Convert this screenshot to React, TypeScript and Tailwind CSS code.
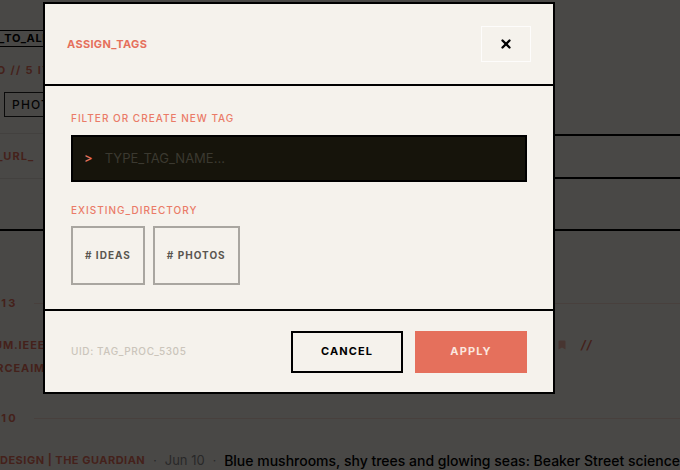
import { X, Bookmark } from "lucide-react";

const existingTags = ["IDEAS", "PHOTOS"];

function PageBehind() {
  return (
    <div className="h-[470px] w-[680px] overflow-hidden bg-[#f5f2ec] font-['Inter',sans-serif]">
      {/* toolbar */}
      <div className="flex flex-col items-start pt-[30px]">
        <div className="-ml-[44px] flex h-[17px] w-[200px] items-center border border-black px-[3px] text-[11px] font-bold tracking-[0.06em] text-black">
          APPLY_TO_ALL
        </div>
        <div className="-ml-[61px] mt-[16px] text-[11px] font-bold leading-[14px] tracking-[0.12em] text-[#e5705c]">
          SELECTED // 5 ITEMS
        </div>
        <div className="ml-[4px] mt-[15px] flex h-[25px] items-center border border-[#222] px-[7px] text-[12px] font-medium tracking-[0.1em] text-[#111]">
          PHOTOS
        </div>
      </div>

      {/* url row */}
      <div className="mt-[16px] flex h-[46px]">
        <div className="flex w-[300px] items-center border-y border-[#e0dbd2] text-[11px] font-bold tracking-[0.1em] text-[#e5705c]">
          <span className="-ml-[55px]">SOURCE_URL_</span>
        </div>
        <div className="mt-[1px] flex-1 border-y-2 border-black" />
      </div>
      <div className="h-[52px] border-b-2 border-black" />

      {/* list */}
      <div className="mt-[65px] flex items-center gap-[16px]">
        <span className="-ml-[33px] text-[11px] font-bold leading-[14px] tracking-[0.2em] text-[#e5705c]">JUN 13</span>
        <div className="h-px flex-1 bg-[#e5705c]/20" />
      </div>
      <div className="mt-[28px] flex">
        <div className="w-[556px] text-[11px] font-bold leading-[14px] tracking-[0.08em] text-[#e5705c]">
          <div className="-ml-[55px]">SPECTRUM.IEEE.ORG</div>
          <div className="-ml-[30px] mt-[9px]">SOURCEAIM</div>
        </div>
        <div className="flex h-[14px] items-center gap-[13px] text-[#e5705c]">
          <Bookmark size={12} className="fill-[#e5705c]/50 text-[#e5705c]/50" strokeWidth={0} />
          <span className="text-[12px] font-bold italic tracking-[0.1em]">//</span>
        </div>
      </div>
      <div className="mt-[36px] flex items-center gap-[16px]">
        <span className="-ml-[33px] text-[11px] font-bold leading-[14px] tracking-[0.2em] text-[#e5705c]">JUN 10</span>
        <div className="h-px flex-1 bg-[#e5705c]/20" />
      </div>
      <div className="mt-[25px] flex items-center gap-[8px] whitespace-nowrap">
        <span className="text-[11px] font-bold tracking-[0.045em] text-[#e5705c]">DESIGN | THE GUARDIAN</span>
        <span className="text-[12px] text-[#888]">·</span>
        <span className="text-[13px] text-[#888]">Jun 10</span>
        <span className="text-[12px] text-[#888]">·</span>
        <span className="text-[14px] font-medium text-black">
          Blue mushrooms, shy trees and glowing seas: Beaker Street science
        </span>
      </div>
    </div>
  );
}

function AssignTagsModal() {
  return (
    <div className="absolute left-[43px] top-[2px] w-[512px] border-2 border-black bg-[#f5f2ec] font-['Inter',sans-serif]">
      <div className="flex h-[82px] items-center justify-between border-b-2 border-black px-[22px]">
        <h2 className="text-[11px] font-bold tracking-[0.03em] text-[#e5705c]">ASSIGN_TAGS</h2>
        <button className="flex h-[36px] w-[50px] items-center justify-center border border-white/80">
          <X size={14} strokeWidth={4} className="text-black" />
        </button>
      </div>

      <div className="border-b-2 border-black px-[26px] pb-[24px] pt-[25px]">
        <div className="text-[10px] font-medium leading-[15px] tracking-[0.1em] text-[#ea7b67]">
          FILTER OR CREATE NEW TAG
        </div>
        <div className="mt-[9px] flex h-[47px] items-center gap-[12px] border-2 border-black bg-[#16140b] pl-[11px]">
          <span className="text-[13px] font-medium text-[#e5705c]">&gt;</span>
          <span className="text-[13px] text-[#3b3930]">TYPE_TAG_NAME...</span>
        </div>
        <div className="mt-[21px] text-[10px] font-medium leading-[15px] tracking-[0.1em] text-[#ea7b67]">
          EXISTING_DIRECTORY
        </div>
        <div className="mt-[8px] flex gap-[8px]">
          {existingTags.map((tag) => (
            <div
              key={tag}
              className="flex h-[59px] items-center border-2 border-[#a9a6a0] px-[12px] text-[10px] font-bold tracking-[0.1em] text-[#5a5650]"
            >
              # {tag}
            </div>
          ))}
        </div>
      </div>

      <div className="flex h-[81px] items-center justify-between px-[26px]">
        <span className="text-[10px] font-medium tracking-[0.06em] text-[#cbc5bb]">UID: TAG_PROC_5305</span>
        <div className="flex gap-[12px]">
          <button className="h-[42px] w-[112px] border-2 border-black text-[11px] font-bold tracking-[0.1em] text-black">
            CANCEL
          </button>
          <button className="h-[42px] w-[112px] bg-[#e5705c] text-[11px] font-bold tracking-[0.1em] text-[#fbe6df]">
            APPLY
          </button>
        </div>
      </div>
    </div>
  );
}

export default function App() {
  return (
    <div className="relative h-[470px] w-[680px] overflow-hidden">
      <PageBehind />
      <div className="absolute inset-0 bg-black/70" />
      <AssignTagsModal />
    </div>
  );
}
